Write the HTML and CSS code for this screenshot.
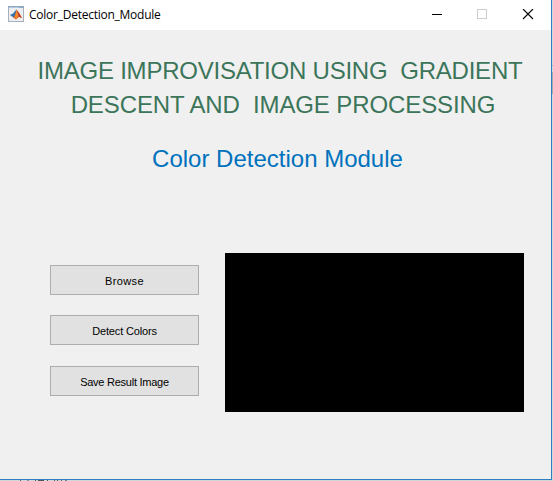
FILE: index.html
```html
<!DOCTYPE html>
<html lang="en">
<head>
<meta charset="utf-8">
<title>Color_Detection_Module</title>
<link rel="stylesheet" href="styles.css">
</head>
<body>
<div class="window">
  <header class="titlebar">
    <svg class="app-icon" width="16" height="16" viewBox="0 0 16 16">
      <rect x=".5" y=".5" width="15" height="15" fill="#eceef1" stroke="#a9b0b9"/>
      <path d="M0 0h16v2H0z" fill="#8fa9c2"/>
      <path d="M1 1h10v1H1z" fill="#b5cadc"/>
      <path d="M2 9 5 7.500 8.500 3.500 8 9l-2.500 2.500z" fill="#3071b0"/>
      <path d="M5 11.500 7 9l1.500-5.500L11 7l3 5-3-1-3 2.500z" fill="#e06a28"/>
      <path d="M8.500 3.500 10 8l-1.500 5-1.500-2 .7-3z" fill="#ef8b31"/>
      <path d="M8.500 3.500 11 7l3 5-3-1.500z" fill="#b63a25"/>
    </svg>
    <h1 class="title">Color_Detection_Module</h1>
    <svg class="controls" width="106" height="12" viewBox="0 0 106 12" fill="none" shape-rendering="crispEdges">
      <path d="M0 5.500h10" stroke="#000"/>
      <path d="M45.500.5h9v9h-9z" stroke="#ccc"/>
      <path d="M91 0l10 10M101 0L91 10" stroke="#000" stroke-width="1.100" shape-rendering="auto"/>
    </svg>
  </header>
  <main class="content">
    <h2 class="heading"><span class="line-one">IMAGE IMPROVISATION USING  GRADIENT</span>
<span class="line-two">DESCENT AND  IMAGE PROCESSING</span></h2>
    <h3 class="subheading">Color Detection Module</h3>
    <div class="workspace">
      <div class="actions">
        <button class="action action-browse">Browse</button>
        <button class="action action-detect">Detect Colors</button>
        <button class="action action-save">Save Result Image</button>
      </div>
      <div class="preview"></div>
    </div>
  </main>
</div>
<div class="backdrop"></div>
</body>
</html>
```

FILE: styles.css
```css
* { box-sizing: border-box; }
body {
  margin: 0;
  height: 481px;
  overflow: hidden;
  background: linear-gradient(#d3d7da 0 65px, #b0b4b8 65px 66px, #d3d7da 66px 72px, #a9adb1 72px 94px, #d3d7da 94px);
  font-family: "Liberation Sans", Arial, sans-serif;
}
.window {
  width: 552px;
  height: 480px;
  background: #f0f0f0;
  border: solid #2d7fc1;
  border-width: 0 1px 1px 0;
}
.titlebar {
  display: flex;
  height: 30px;
  padding: 6px 13px 0 8px;
  background: #fff;
}
.title {
  margin: 0 0 0 5px;
  font: 12px/17px "Open Sans", "Noto Sans", sans-serif;
  letter-spacing: -.25px;
}
.controls { margin: 3px 0 0 auto; }
.content { padding-top: 24px; }
.heading, .subheading {
  margin: 0;
  text-align: center;
  font-size: 24px;
  font-weight: 400;
  line-height: 34px;
  white-space: pre;
}
.heading { color: #3c755a; padding-left: 9px; }
.line-one { letter-spacing: -.23px; }
.line-two { padding-left: 6px; letter-spacing: -.1px; }
.subheading {
  margin-top: 20px;
  padding-left: 4px;
  color: #0072bd;
}
.workspace {
  display: flex;
  gap: 26px;
  margin: 77px 0 0 50px;
}
.actions {
  display: flex;
  flex-direction: column;
  gap: 20px;
  padding-top: 12px;
}
.action {
  width: 149px;
  height: 30px;
  padding: 2px 0 0;
  background: #e1e1e1;
  border: 1px solid #adadad;
  border-radius: 0;
  color: #000;
  font: 11px/13px "Liberation Sans", Arial, sans-serif;
}
.action-browse { letter-spacing: .4px; }
.action-detect { letter-spacing: -.15px; }
.action-save { margin-top: 1px; letter-spacing: -.25px; }
.preview { width: 299px; height: 159px; background: #000; }
.backdrop {
  height: 1px;
  margin: 0 0 0 20px;
  width: 47px;
  background: linear-gradient(90deg, #635b70 0 1px, transparent 1px 7px, #8590a0 7px 9px, transparent 9px 15px, #555 15px 16px, transparent 16px 18px, #50565e 18px 24px, transparent 24px 27px, #555 27px 28px, transparent 28px 34px, #6b5560 34px 35px, transparent 35px 37px, #50565e 37px 38px, transparent 38px 41px, #5a6878 41px 42px, transparent 42px 45px, #7a8090 45px 47px);
}
```
